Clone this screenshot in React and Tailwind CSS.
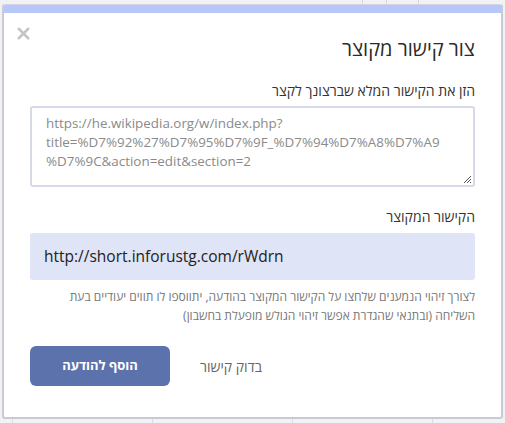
import { X } from 'lucide-react';

const font = { fontFamily: '"Open Sans", "Liberation Sans", sans-serif' };

export default function App() {
  return (
    <div className="relative w-[505px] h-[423px] overflow-hidden bg-[#f2f2f4]" style={font}>
      {/* page behind the modal */}
      <div className="absolute inset-x-0 bottom-0 h-[8px] flex">
        <div className="w-[13px] border-r border-[#dcdce4]" />
        <div className="w-[140px] border-r border-[#dcdce4]" />
        <div className="w-[140px] border-r border-[#dcdce4]" />
        <div className="w-[140px] border-r border-[#dcdce4]" />
      </div>
      <div className="absolute top-0 left-[360px] h-[6px] flex">
        <div className="w-[3px] border-r border-[#d8d8de]" />
        <div className="w-[24px] border-r border-[#d8d8de]" />
        <div className="w-[32px] border-r border-[#d8d8de]" />
      </div>

      {/* modal */}
      <div
        dir="rtl"
        className="absolute left-[2px] top-[4px] w-[501px] h-[415px] bg-white border-2 border-[#c9c9d8] border-t-0 rounded-[3px] flex flex-col"
      >
        <div className="h-[9px] bg-[#b7c8f8] border-t border-[#d0d4e4] rounded-t-[2px]" />
        <div className="relative px-[26px]">
          <button className="absolute left-[10px] top-[11px] text-[#c4c4c8]">
            <X size={19} strokeWidth={3.2} />
          </button>
          <h1 className="pt-[22px] text-[20px] leading-[28px] text-[#2a2a2a]">צור קישור מקוצר</h1>

          <label className="block mt-[18px] text-[14px] leading-[20px] text-[#333]">
            הזן את הקישור המלא שברצונך לקצר
          </label>
          <div
            dir="ltr"
            className="relative mt-[5px] h-[81px] border-2 border-[#d6d9e8] rounded-[3px] pl-[14px] pr-[10px] pt-[6px] text-[13.4px] leading-[19px] text-[#8a8a8a] break-all"
          >
            https://he.wikipedia.org/w/index.php?
            <br />
            title=%D7%92%27%D7%95%D7%9F_%D7%94%D7%A8%D7%A9
            <br />
            %D7%9C&amp;action=edit&amp;section=2
            <svg className="absolute right-[1px] bottom-[1px]" width="9" height="9" viewBox="0 0 9 9">
              <path d="M8 1L1 8M8 4L4 8M8 7L7 8" stroke="#555" strokeWidth="1" />
            </svg>
          </div>

          <label className="block mt-[20px] text-[14px] leading-[20px] text-[#333]">הקישור המקוצר</label>
          <div
            dir="ltr"
            className="mt-[6px] h-[47px] rounded-[3px] bg-[#dfe4f6] pl-[14px] flex items-center text-[15.5px] text-[#222]"
          >
            http://short.inforustg.com/rWdrn
          </div>

          <p className="mt-[7px] text-[12px] leading-[19px] text-[#777]">
            לצורך זיהוי הנמענים שלחצו על הקישור המקוצר בהודעה, יתווספו לו תווים יעודיים בעת השליחה (ובתנאי שהגדרת אפשר זיהוי הגולש מופעלת בחשבון)
          </p>

          <div className="mt-[21px] flex items-center justify-end gap-[30px]">
            <span className="text-[14px] text-[#666]">בדוק קישור</span>
            <button className="w-[140px] h-[40px] rounded-[6px] bg-[#5b72ad] text-white text-[13px] font-bold">
              הוסף להודעה
            </button>
          </div>
        </div>
      </div>
    </div>
  );
}
